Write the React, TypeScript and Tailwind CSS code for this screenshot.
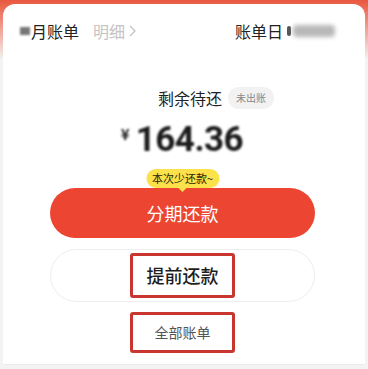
import React from "react";

export default function App() {
  return (
    <div
      className="w-[368px] h-[369px] overflow-hidden bg-[linear-gradient(to_bottom,#e9573f_0px,#ef8a78_20px,#f3f3f3_60px,#f3f3f3_100%)] pt-[4px] px-[3px]"
      style={{ fontFamily: '"Noto Sans CJK SC", "Noto Sans", sans-serif' }}
    >
      <div className="relative h-[361px] rounded-t-[12px] bg-white border-b border-[#ececec]">
        {/* header */}
        <div className="flex items-center justify-between pt-[15px] pl-[17px] pr-[30px] h-[38px]">
          <div className="flex items-center gap-[14px] text-[16px] leading-[22px]">
            <span className="flex items-center text-[#222]">
              <span className="inline-block w-[10px] h-[8px] bg-[#777] blur-[1px] mr-[1px]"></span>
              月账单
            </span>
            <span className="text-[#c4c4c4] flex items-center gap-[4px]">
              明细
              <svg width="7" height="12" viewBox="0 0 7 12" fill="none">
                <path d="M1 1l5 5-5 5" stroke="#c4c4c4" strokeWidth="1.3" />
              </svg>
            </span>
          </div>
          <div className="flex items-center text-[16px] leading-[22px] text-[#222]">
            账单日
            <span className="ml-[4px] inline-block w-[4px] h-[10px] bg-[#555] rounded-full blur-[0.5px]"></span>
            <span className="ml-[2px] inline-block w-[42px] h-[12px] bg-[#b8b8b8] blur-[2px] rounded-sm"></span>
          </div>
        </div>

        {/* title */}
        <div className="flex items-center justify-center mt-[44px] pl-[64px]">
          <span className="text-[16px] leading-[24px] text-[#222]">剩余待还</span>
          <span className="ml-[6px] px-[8px] h-[22px] leading-[22px] rounded-full bg-[#f2f2f2] text-[10px] text-[#888]">
            未出账
          </span>
        </div>

        {/* amount */}
        <div className="flex items-start justify-center mt-[12px] pr-[4px] text-[#1b1b1b] blur-[1.2px]">
          <span className="text-[15px] font-bold leading-[15px] mt-[4px] mr-[6px]">¥</span>
          <span className="text-[35px] font-bold leading-[36px] tracking-[-0.5px]" style={{ fontFamily: 'Roboto, sans-serif' }}>
            164.36
          </span>
        </div>

        {/* buttons */}
        <div className="relative mt-[30px] ml-[47px] mr-[50px]">
          <div className="absolute left-1/2 -translate-x-1/2 -top-[19px] z-10 flex flex-col items-center">
            <div className="px-[6px] h-[19px] leading-[19px] rounded-full bg-[#fbe24a] text-[11px] text-[#2a1e00] whitespace-nowrap">
              本次少还款~
            </div>
            <div className="w-0 h-0 border-l-[4px] border-r-[4px] border-t-[4px] border-l-transparent border-r-transparent border-t-[#fbe24a]"></div>
          </div>
          <div className="h-[50px] rounded-full bg-[#ec4531] flex items-center justify-center text-white text-[18px]">
            分期还款
          </div>
          <div className="mt-[11px] h-[53px] rounded-full border border-[#ededed] flex items-center justify-center">
            <div className="w-[105px] h-[45px] border-[3px] border-[#c8362f] rounded-[3px] flex items-center justify-center text-[18px] font-medium text-[#1e1e1e]">
              提前还款
            </div>
          </div>
          <div className="mt-[10px] flex justify-center">
            <div className="w-[105px] h-[41px] border-[3px] border-[#c8362f] rounded-[3px] flex items-center justify-center text-[14px] text-[#555]">
              全部账单
            </div>
          </div>
        </div>
      </div>
    </div>
  );
}
